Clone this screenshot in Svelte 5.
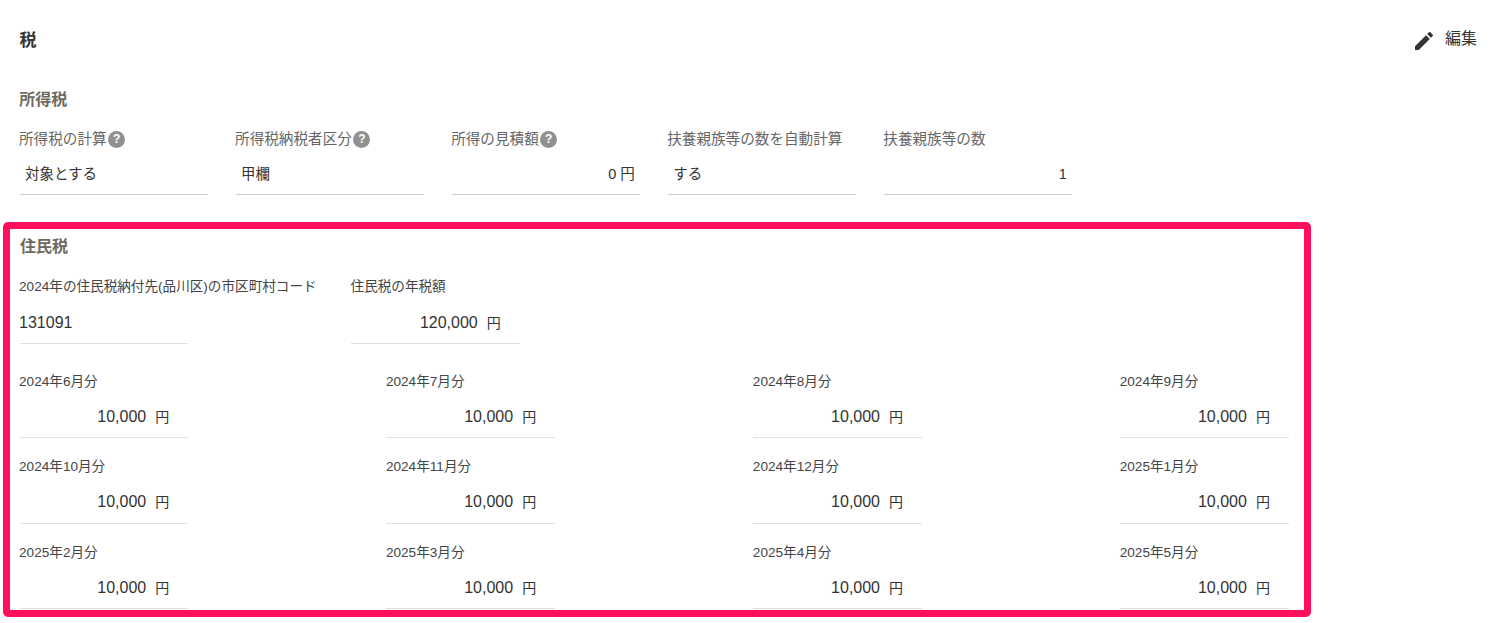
<script>
  const income = [
    { label: '所得税の計算', help: true, value: '対象とする' },
    { label: '所得税納税者区分', help: true, value: '甲欄' },
    { label: '所得の見積額', help: true, value: '0 円', right: true },
    { label: '扶養親族等の数を自動計算', value: 'する' },
    { label: '扶養親族等の数', value: '1', right: true }
  ];
  const months = ['2024年6月分','2024年7月分','2024年8月分','2024年9月分','2024年10月分','2024年11月分','2024年12月分','2025年1月分','2025年2月分','2025年3月分','2025年4月分','2025年5月分'];
</script>

<main class="page">
  <header class="top">
    <h2>税</h2>
    <button class="edit">
      <svg viewBox="0 0 24 24" width="24" height="24" aria-hidden="true"><path d="M3 17.25V21h3.75L17.81 9.94l-3.75-3.75L3 17.25zM20.71 7.04a1 1 0 0 0 0-1.41l-2.34-2.34a1 1 0 0 0-1.41 0l-1.83 1.83 3.75 3.75 1.83-1.83z"/></svg>
      <span class="edit-text">編集</span>
    </button>
  </header>

  <section class="income">
    <h3>所得税</h3>
    <div class="income-row">
      {#each income as f}
        <div class="income-field">
          <div class="income-label">{f.label}{#if f.help}<span class="help">?</span>{/if}</div>
          <div class="income-value" class:right={f.right}>{f.value}</div>
        </div>
      {/each}
    </div>
  </section>

  <section class="resident">
    <h3>住民税</h3>
    <div class="resident-top">
      <div class="code-col">
        <div class="label">2024年の住民税納付先(品川区)の市区町村コード</div>
        <div class="value code">131091</div>
      </div>
      <div class="annual-col">
        <div class="label">住民税の年税額</div>
        <div class="value money"><span class="num">120,000</span><span class="yen">円</span></div>
      </div>
    </div>
    <div class="months">
      {#each months as m}
        <div class="month">
          <div class="label">{m}</div>
          <div class="value money"><span class="num">10,000</span><span class="yen">円</span></div>
        </div>
      {/each}
    </div>
  </section>
</main>

<style>
  :global(body) { margin: 0; background: #fff; }
  .page {
    width: 1496px; height: 623px; overflow: hidden; box-sizing: border-box;
    font-family: "Liberation Sans", "Noto Sans CJK JP", sans-serif; color: #333;
  }
  h2, h3 { margin: 0; font-weight: 700; }
  .top {
    display: flex; justify-content: space-between; align-items: center;
    height: 24px; padding: 29px 19px 0 19.6px;
  }
  .top h2 { font-size: 17px; line-height: 24px; color: #333; }
  .edit {
    display: flex; align-items: center; gap: 9px; border: 0; background: none; padding: 0;
    font: inherit; font-size: 16px; color: #333;
  }
  .edit svg { fill: #333; display: block; }
  .edit-text { line-height: 20px; margin-bottom: 4px; }
  .income { padding: 36px 0 0 19.6px; }
  .income h3 { font-size: 16px; line-height: 22px; color: #6f6a60; margin-left: -.3px; }
  .income-row { display: flex; gap: 27.7px; margin-top: 17px; }
  .income-field { width: 188.4px; }
  .income-label {
    display: flex; align-items: center; white-space: nowrap; margin-left: -.6px;
    font-size: 14.6px; line-height: 22px; color: #666; height: 22px;
  }
  .help {
    width: 17px; height: 17px; border-radius: 50%; background: #919191; color: #fff; margin-left: 1.5px;
    font-size: 12px; font-weight: 700; line-height: 17px; text-align: center; flex: none;
  }
  .income-value {
    height: 44px; line-height: 46px; box-sizing: border-box; border-bottom: 1px solid #ccc;
    padding: 0 5.4px; font-size: 14.5px; margin-top: 1px; color: #333;
  }
  .income-value.right { text-align: right; }
  .resident {
    margin: 27px 0 0 3px; width: 1308px; height: 395px; box-sizing: border-box;
    border: 7px solid #ff0f5c; border-radius: 5px; padding: 7px 0 0 9.55px; overflow: hidden;
  }
  .resident h3 { font-size: 16px; line-height: 22px; color: #6f6a60; margin-left: .4px; }
  .resident-top { display: flex; margin-top: 19px; }
  .code-col { width: 331.5px; }
  .label { font-size: 13.6px; line-height: 20px; color: #444; white-space: nowrap; margin-left: -.5px; }
  .value {
    width: 168.7px; height: 47px; box-sizing: border-box; border-bottom: 1px solid #e4dfd7;
    font-size: 16px; line-height: 52px; color: #333;
  }
  .value.code { text-indent: -.5px; }
  .money { display: flex; justify-content: flex-end; padding-right: 19px; gap: 9px; }
  .yen { font-size: 14px; }
  .months {
    display: grid; grid-template-columns: repeat(4, 366.9px); grid-auto-rows: 85.5px; margin-top: 27.8px;
  }
  .month .value { height: 46.3px; line-height: 50px; }
</style>
